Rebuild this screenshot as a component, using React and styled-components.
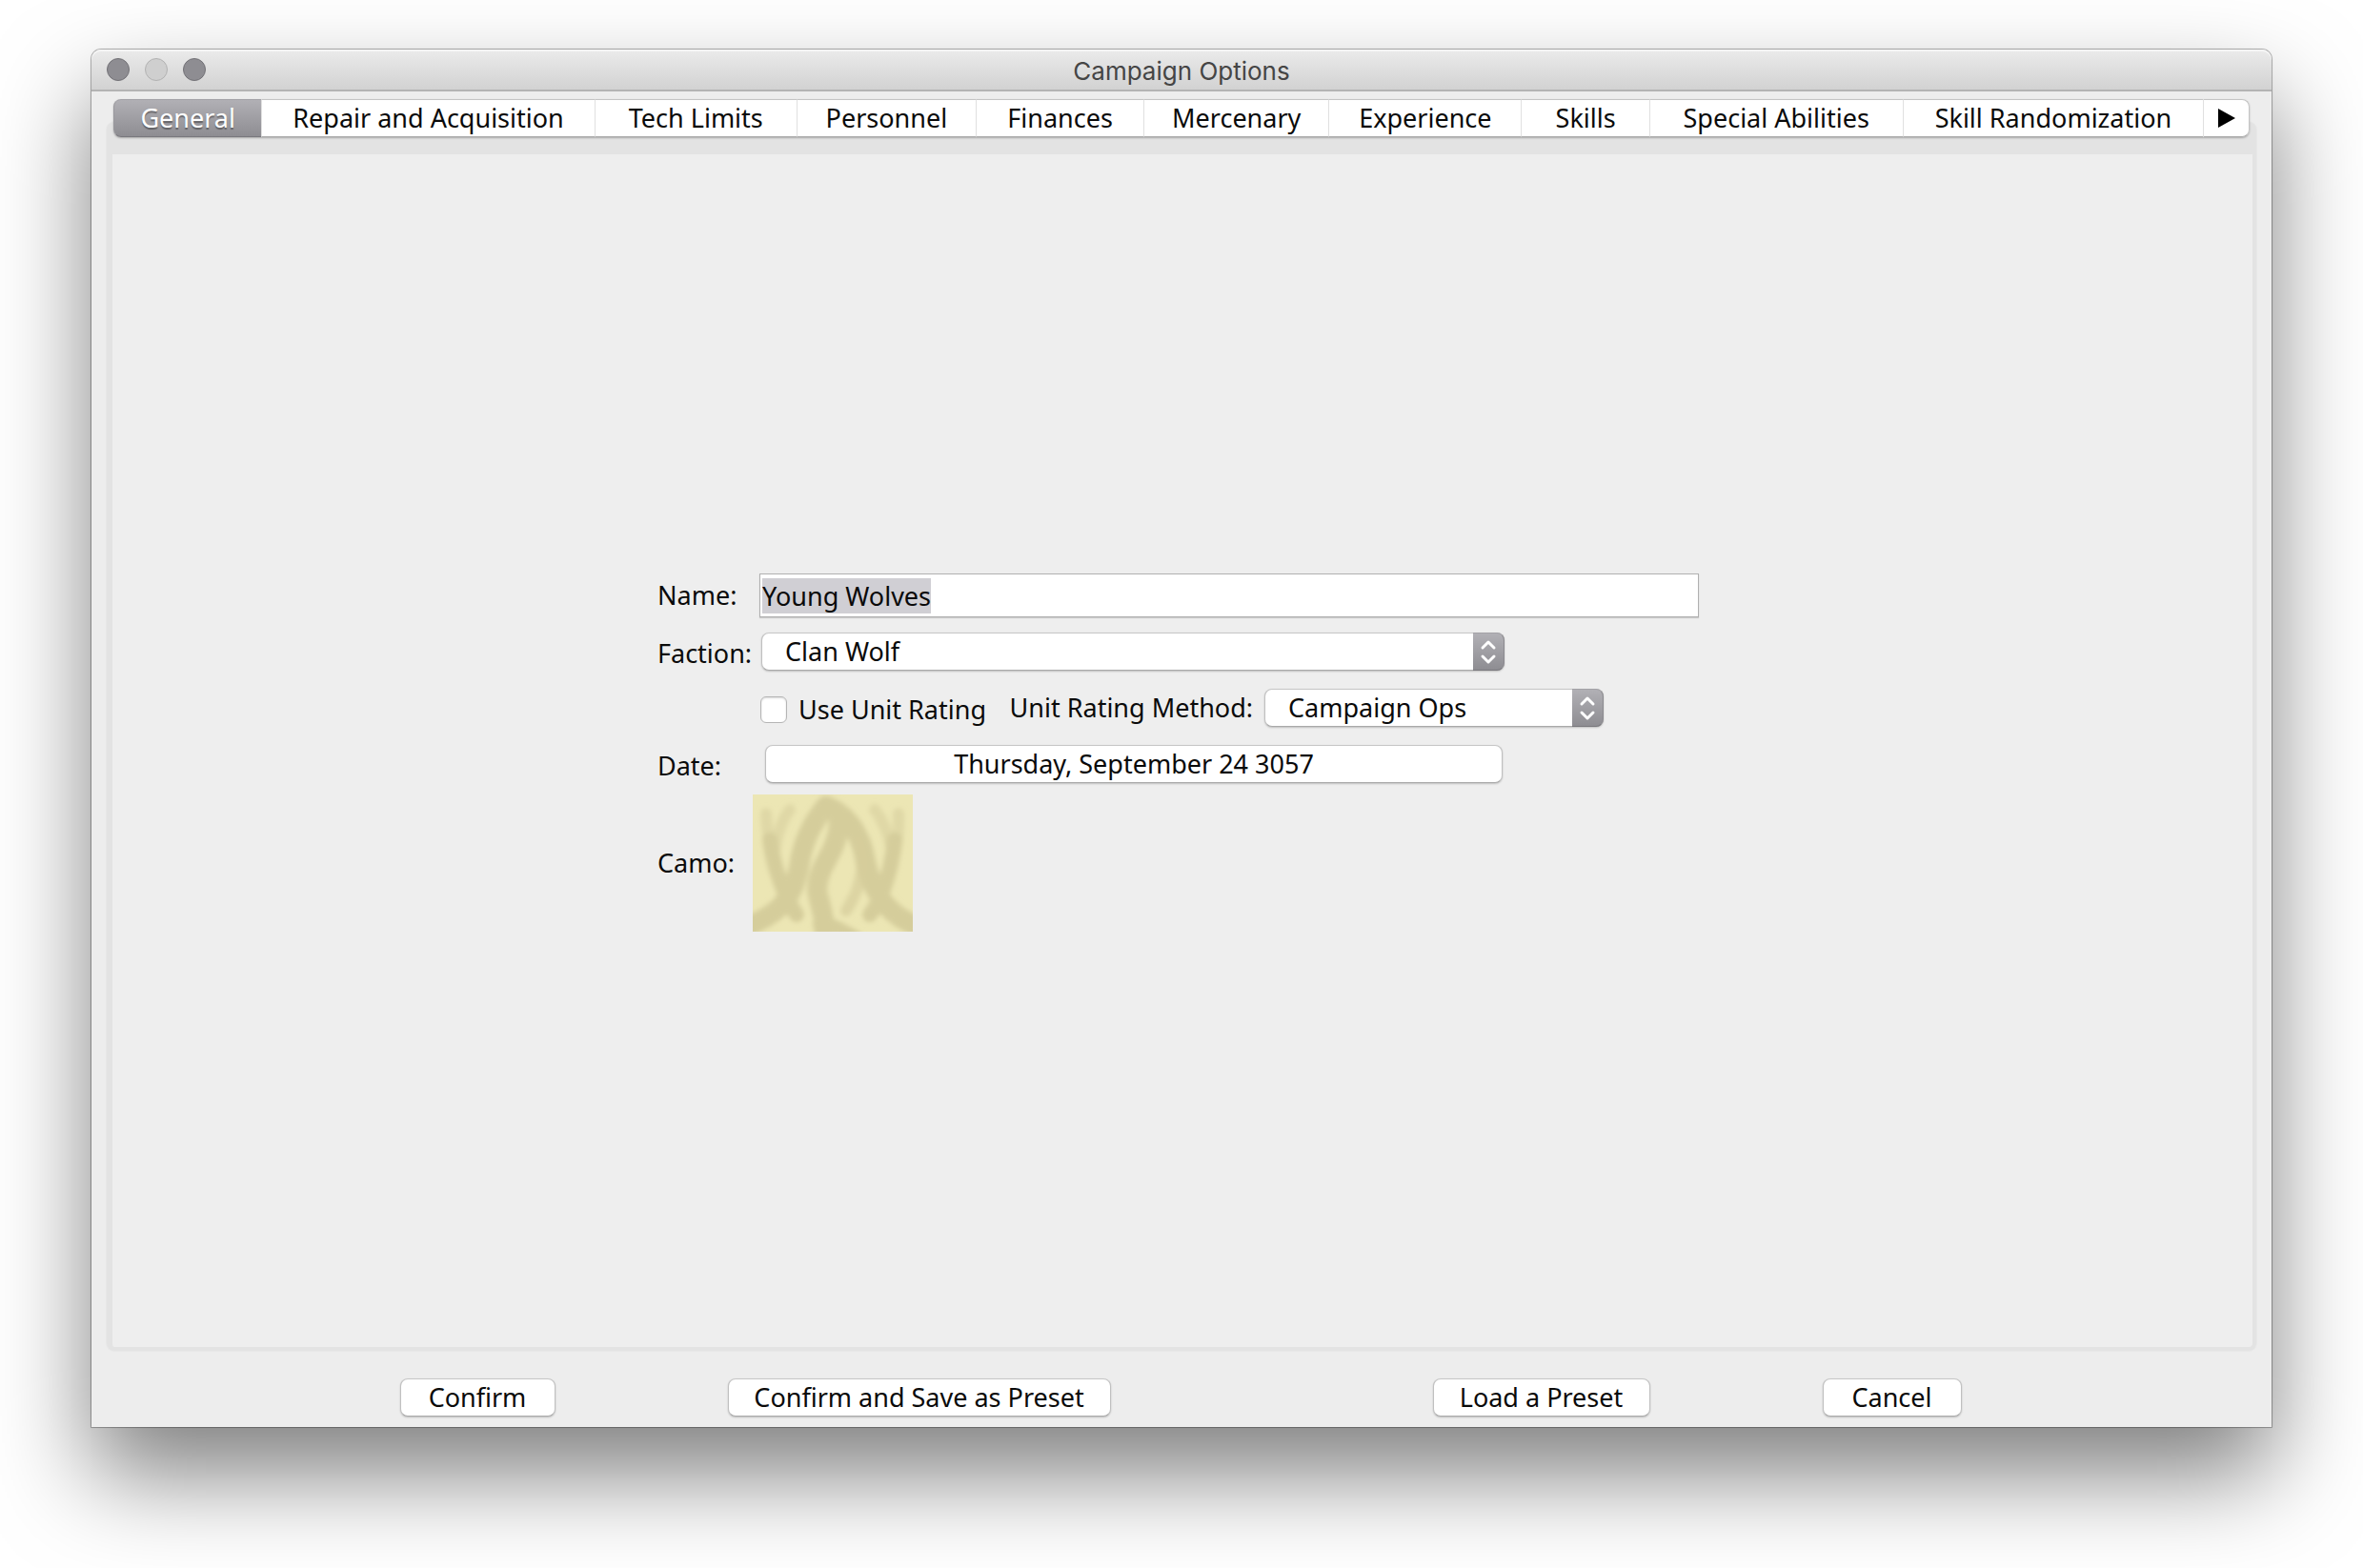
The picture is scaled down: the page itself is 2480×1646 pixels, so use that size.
import React, { useEffect, useRef, useState } from "react";
import styled, { createGlobalStyle, css } from "styled-components";

const fonts = {
  ui: '"Noto Sans", "Open Sans", sans-serif',
  title: 'Inter, Roboto, sans-serif',
};

const GlobalStyle = createGlobalStyle`
  *, *::before, *::after { box-sizing: border-box; }
  body {
    margin: 0;
    background: #fff;
    color: #0a0a0a;
    font: 27px/32px ${fonts.ui};
  }
  button, input, select { font: inherit; color: inherit; margin: 0; }
`;

const Desktop = styled.div`
  display: flex;
  min-height: 100vh;
  padding: 52px 96px 148px;
  overflow: hidden;
`;

const Window = styled.main`
  flex: 1;
  min-width: 0;
  display: flex;
  flex-direction: column;
  background: #ededed;
  border-radius: 10px 10px 0 0;
  box-shadow: 0 0 0 1px rgba(0, 0, 0, 0.2), 0 0 2px rgba(0, 0, 0, 0.4), 0 50px 100px rgba(0, 0, 0, 0.5);
`;

const TitleBar = styled.header`
  display: grid;
  grid-template-columns: 1fr auto 1fr;
  align-items: center;
  height: 44px;
  padding: 0 16px;
  border-bottom: 2px solid #b4b4b4;
  border-radius: 10px 10px 0 0;
  background: linear-gradient(#ebebeb, #d2d2d2);
  box-shadow: inset 0 2px 0 #f5f5f5;
`;

const Lights = styled.div`
  display: flex;
  gap: 16px;
`;

const Light = styled.button`
  width: 24px;
  height: 24px;
  padding: 0;
  border: 1px solid ${(p) => (p.disabled ? "#b2b2b2" : "#727176")};
  border-radius: 50%;
  background: ${(p) => (p.disabled ? "#cfcfcf" : "#8e8d92")};
`;

const Title = styled.h1`
  margin: 0;
  padding-top: 3px;
  font: 400 26px/32px ${fonts.title};
  color: #454545;
`;

const TabStrip = styled.nav`
  display: flex;
  position: relative;
  z-index: 1;
  height: 40px;
  margin: 8px 23px 0;
  border-radius: 8px;
  box-shadow: 0 1px 2px rgba(0, 0, 0, 0.25);
`;

const Tab = styled.button`
  flex: ${(p) => p.$share} 1 0;
  min-width: 0;
  padding: 0;
  border: 1px solid;
  border-right-width: 0;
  border-color: #c4c4c4 #e0e0e0 #a9a9a9 #e0e0e0;
  background: #fff;
  white-space: nowrap;
  display: flex;
  align-items: center;
  justify-content: center;

  &:first-child { border-radius: 8px 0 0 8px; }
  &:last-child {
    border-radius: 0 8px 8px 0;
    border-right: 1px solid #c4c4c4;
  }

  ${(p) =>
    p.$active &&
    css`
      color: #fff;
      border-color: #a3a2a7 #8e8d92 #79787d #99989d;
      background: linear-gradient(#b1b0b5, #8e8d92);
      text-shadow: 0 2px 1px rgba(0, 0, 0, 0.35);
    `}
`;

const Panel = styled.section`
  flex: 1;
  display: flex;
  align-items: center;
  justify-content: center;
  margin: -16px 16px 0;
  border: solid #e3e3e3;
  border-width: 34px 4px 4px 6px;
  border-radius: 8px;
  background: #eee;
  box-shadow: 0 0 0 1px #e8e8e8;
`;

const Form = styled.form`
  display: grid;
  grid-template-columns: 100px minmax(0, 993px);
  grid-auto-rows: minmax(59px, auto);
  padding-right: 9px;
`;

const Cell = styled.div`
  display: flex;
  align-items: center;
  height: ${(p) => (p.$tall ? "148px" : "58px")};
`;

const Label = styled.label`
  white-space: nowrap;
  padding-top: ${(p) => (p.$low ? "4px" : "0")};
`;

const TextField = styled.input`
  flex: 1;
  height: 46px;
  margin-left: 7px;
  padding: 0 2px;
  border: 1px solid #b0b0b0;
  border-radius: 0;
  background: #fff;
  box-shadow: 0 1px 1px rgba(0, 0, 0, 0.15);
  outline: none;

  &::selection { background: #d0cfd4; color: #0a0a0a; }
`;

const raised = css`
  height: 40px;
  border: 1px solid;
  border-color: #c6c6c6 #c0c0c0 #a9a9a9;
  border-radius: 8px;
  background: #fff;
  box-shadow: 0 1px 2px rgba(0, 0, 0, 0.2);
`;

const PushButton = styled.button`
  ${raised}
  display: flex;
  align-items: center;
  justify-content: center;
  padding: 0;
  width: ${(p) => p.$width}px;
  margin-left: ${(p) => p.$inset || 0}px;
  white-space: nowrap;
`;

const SelectBox = styled.div`
  display: grid;
  width: ${(p) => p.$width}px;
  margin-left: ${(p) => p.$inset}px;

  > * { grid-area: 1 / 1; }
`;

const NativeSelect = styled.select`
  ${raised}
  appearance: none;
  width: 100%;
  padding: 0 40px 0 24px;
  line-height: 38px;
  outline: none;
`;

const Stepper = styled.span`
  justify-self: end;
  display: grid;
  place-items: center;
  width: 33px;
  height: 40px;
  border: solid;
  border-width: 1px 1px 1px 0;
  border-color: #a3a2a7 #8b8a8f #79787d;
  border-radius: 0 8px 8px 0;
  background: linear-gradient(#b1b0b5, #8e8d92);
  pointer-events: none;
`;

const CheckBox = styled.input`
  appearance: none;
  width: 28px;
  height: 28px;
  margin: 4px 12px 0 8px;
  border: 1px solid #b5b5b5;
  border-radius: 6px;
  background: #fff;
  box-shadow: inset 0 1px 2px rgba(0, 0, 0, 0.15);

  &:checked { background: #8e8d92; }
`;

const MethodLabel = styled(Label)`
  margin-left: auto;
`;

const RatingRow = styled.div`
  display: flex;
  align-items: center;
  width: 893px;
`;

const CamoButton = styled.button`
  display: block;
  width: 168px;
  height: 144px;
  padding: 0;
  border: 0;

  svg { display: block; }
`;

const Footer = styled.footer`
  display: flex;
  justify-content: center;
  gap: 338px;
  padding: 29px 2px 11px 0;
`;

const ButtonGroup = styled.div`
  display: flex;
  gap: 181px;
`;

const TABS = [
  ["General", 155],
  ["Repair and Acquisition", 350],
  ["Tech Limits", 212],
  ["Personnel", 188],
  ["Finances", 176],
  ["Mercenary", 194],
  ["Experience", 202],
  ["Skills", 134],
  ["Special Abilities", 266],
  ["Skill Randomization", 316],
];

function PopUp({ id, width, inset, options }) {
  return (
    <SelectBox $width={width} $inset={inset}>
      <NativeSelect id={id}>
        {options.map((o) => (
          <option key={o}>{o}</option>
        ))}
      </NativeSelect>
      <Stepper>
        <svg width="18" height="28" viewBox="0 0 18 28" fill="none" stroke="#fff" strokeWidth="3" strokeLinecap="round" strokeLinejoin="round">
          <path d="M3 10 L9 4 L15 10" />
          <path d="M3 19 L9 25 L15 19" />
        </svg>
      </Stepper>
    </SelectBox>
  );
}

function Camo() {
  return (
    <svg width="168" height="144" viewBox="0 0 168 144">
      <defs>
        <filter id="soft" x="-10%" y="-10%" width="120%" height="120%">
          <feGaussianBlur stdDeviation="2.5" />
        </filter>
      </defs>
      <rect width="168" height="144" fill="#ece6b4" />
      <g filter="url(#soft)" fill="none" stroke="#d5cd9b" strokeLinecap="round" strokeLinejoin="round">
        <g strokeWidth="12" opacity="0.55">
          <path d="M14 20 C14 36 17 50 21 70 M39 16 C31 26 26 40 23 60" />
          <path d="M128 16 C136 26 142 40 146 58 M153 20 C154 36 152 50 147 70" />
        </g>
        <path d="M18 48 C21 70 27 88 34 104 C38 114 42 120 46 126" strokeWidth="16" />
        <path d="M149 48 C147 68 143 84 137 100 C133 112 128 120 123 126" strokeWidth="16" />
        <path d="M77 12 C62 30 52 52 49 74 C46 92 40 106 29 118 C20 126 10 132 -4 138" strokeWidth="21" />
        <path d="M77 12 C98 20 109 36 116 58 C120 82 126 98 138 114 C148 126 158 132 172 138" strokeWidth="21" />
        <path d="M90 24 C92 40 86 54 77 70 C68 86 66 98 69 108 C73 122 76 132 75 150" strokeWidth="21" />
        <path d="M70 136 C82 134 92 142 108 150" strokeWidth="14" />
        <path d="M110 50 C116 64 116 78 112 92 C108 106 102 116 98 122" strokeWidth="12" opacity="0.7" />
      </g>
    </svg>
  );
}

export default function App() {
  const nameRef = useRef(null);
  const [name, setName] = useState("Young Wolves");
  const [active, setActive] = useState("General");

  useEffect(() => {
    nameRef.current.focus();
    nameRef.current.select();
  }, []);

  return (
    <>
      <GlobalStyle />
      <Desktop>
        <Window>
          <TitleBar>
            <Lights>
              <Light aria-label="Close" />
              <Light aria-label="Minimize" disabled />
              <Light aria-label="Zoom" />
            </Lights>
            <Title>Campaign Options</Title>
          </TitleBar>

          <TabStrip aria-label="Option pages">
            {TABS.map(([label, share]) => (
              <Tab key={label} type="button" $share={share} $active={label === active} onClick={() => setActive(label)}>
                {label}
              </Tab>
            ))}
            <Tab type="button" $share={47} aria-label="More tabs">
              <svg width="18" height="20" viewBox="0 0 18 20">
                <path d="M0 0 L18 10 L0 20 Z" fill="#000" />
              </svg>
            </Tab>
          </TabStrip>

          <Panel>
            <Form onSubmit={(e) => e.preventDefault()}>
              <Cell><Label htmlFor="name">Name:</Label></Cell>
              <Cell>
                <TextField id="name" ref={nameRef} value={name} onChange={(e) => setName(e.target.value)} />
              </Cell>

              <Cell><Label htmlFor="faction" $low>Faction:</Label></Cell>
              <Cell><PopUp id="faction" width={780} inset={9} options={["Clan Wolf"]} /></Cell>

              <Cell />
              <Cell>
                <RatingRow>
                  <CheckBox type="checkbox" id="use-rating" />
                  <Label htmlFor="use-rating" $low>Use Unit Rating</Label>
                  <MethodLabel htmlFor="method">Unit Rating Method:</MethodLabel>
                  <PopUp id="method" width={356} inset={12} options={["Campaign Ops"]} />
                </RatingRow>
              </Cell>

              <Cell><Label htmlFor="date" $low>Date:</Label></Cell>
              <Cell>
                <PushButton id="date" type="button" $width={774} $inset={13}>Thursday, September 24 3057</PushButton>
              </Cell>

              <Cell $tall><Label htmlFor="camo">Camo:</Label></Cell>
              <Cell $tall>
                <CamoButton id="camo" type="button"><Camo /></CamoButton>
              </Cell>
            </Form>
          </Panel>

          <Footer>
            <ButtonGroup>
              <PushButton type="button" $width={163}>Confirm</PushButton>
              <PushButton type="button" $width={402}>Confirm and Save as Preset</PushButton>
            </ButtonGroup>
            <ButtonGroup>
              <PushButton type="button" $width={228}>Load a Preset</PushButton>
              <PushButton type="button" $width={146}>Cancel</PushButton>
            </ButtonGroup>
          </Footer>
        </Window>
      </Desktop>
    </>
  );
}
